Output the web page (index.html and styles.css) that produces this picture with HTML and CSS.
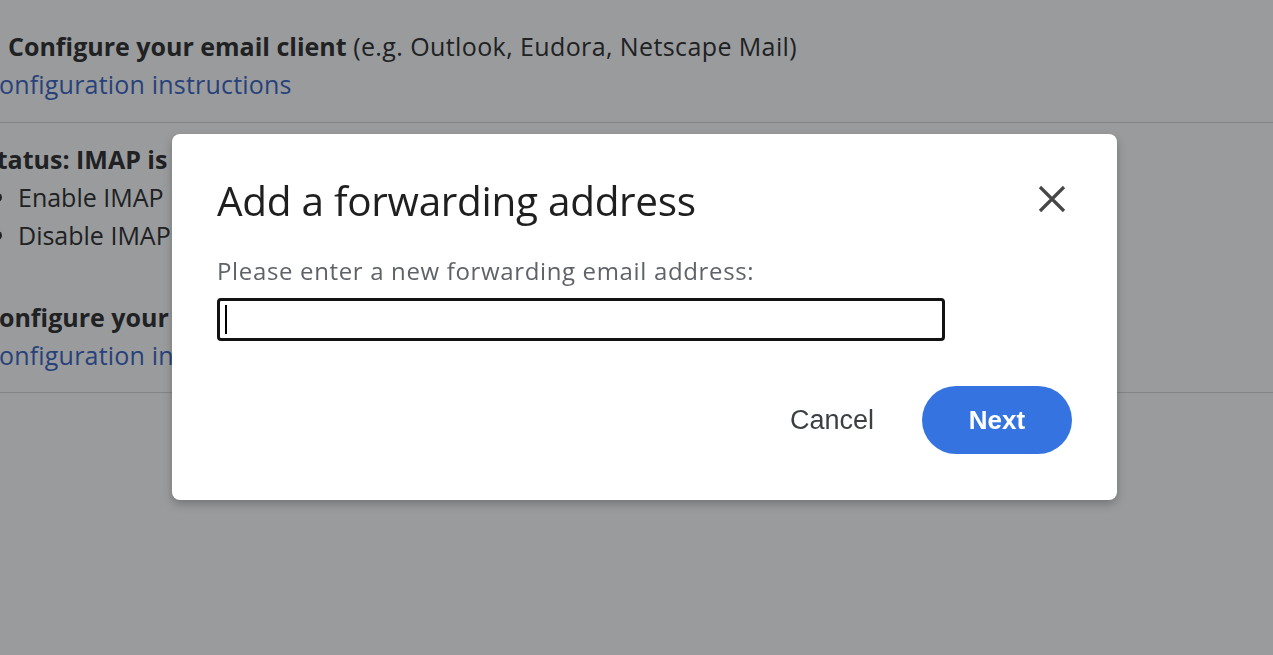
FILE: index.html
```html
<!DOCTYPE html>
<html lang="en">
<head>
<meta charset="utf-8">
<title>Add a forwarding address</title>
<link rel="stylesheet" href="styles.css">
</head>
<body>
<main class="page">
  <section class="block block-first">
    <p class="line indent"><b>Configure your email client</b> <span class="note">(e.g. Outlook, Eudora, Netscape Mail)</span></p>
    <p class="line"><a class="link" href="#">Configuration instructions</a></p>
  </section>
  <section class="block block-second">
    <p class="line"><b>Status: IMAP is disabled</b></p>
    <ul class="opts">
      <li>Enable IMAP</li>
      <li>Disable IMAP</li>
    </ul>
    <p class="line gap"><b>Configure your email client</b> <span class="note">(e.g. Outlook, Thunderbird, iPhone)</span></p>
    <p class="line"><a class="link" href="#">Configuration instructions</a></p>
  </section>
</main>

<div class="overlay">
  <div class="dialog" role="dialog" aria-labelledby="dlg-title">
    <div class="dialog-head">
      <h1 id="dlg-title" class="dialog-title">Add a forwarding address</h1>
      <button class="close" aria-label="Close">
        <svg width="30" height="30" viewBox="0 0 30 30" aria-hidden="true">
          <path d="M3 3 L27 27 M27 3 L3 27" stroke="#474747" stroke-width="3.2" fill="none"/>
        </svg>
      </button>
    </div>
    <label class="field-label" for="fwd">Please enter a new forwarding email address:</label>
    <div class="field"><span class="caret"></span><input id="fwd" class="input" type="text"></div>
    <div class="actions">
      <button class="btn-text">Cancel</button>
      <button class="btn-primary">Next</button>
    </div>
  </div>
</div>
</body>
</html>
```

FILE: styles.css
```css
html, body {
  margin: 0;
  padding: 0;
  width: 1273px;
  height: 655px;
  overflow: hidden;
  background: #ffffff;
}

.page {
  margin-left: -17px;
  font-family: "Open Sans", "Noto Sans", sans-serif;
  font-size: 25px;
  color: #202124;
}

.block {
  border-bottom: 1px solid #d6d6d6;
}

.block-first {
  padding: 27px 0 19px 0;
}

.block-second {
  padding: 17px 0 18px 0;
}

.indent {
  padding-left: 25px;
}

.line {
  margin: 0;
  line-height: 38px;
  white-space: nowrap;
}

.line b {
  font-weight: 700;
}

.note {
  letter-spacing: 0.4px;
}

.gap {
  margin-top: 44px;
}

.link {
  color: #2f5cc4;
  text-decoration: none;
  letter-spacing: 0.2px;
}

.opts {
  margin: 0;
  padding: 0 0 0 35px;
  line-height: 38px;
}

.opts li {
  white-space: nowrap;
}

.overlay {
  position: fixed;
  inset: 0;
  background: rgba(32, 33, 36, 0.45);
}

.dialog {
  position: absolute;
  left: 172px;
  top: 134px;
  width: 945px;
  height: 366px;
  box-sizing: border-box;
  background: #ffffff;
  border-radius: 8px;
  box-shadow: 0 4px 10px rgba(0, 0, 0, 0.25);
  padding: 36px 45px 0 45px;
  display: flex;
  flex-direction: column;
}

.dialog-head {
  display: flex;
  align-items: center;
  justify-content: space-between;
  height: 60px;
}

.dialog-title {
  margin: 0;
  font-family: "Open Sans", "Noto Sans", sans-serif;
  font-weight: 400;
  font-size: 40.5px;
  color: #1f1f1f;
  letter-spacing: -0.3px;
}

.close {
  border: 0;
  background: none;
  padding: 0;
  width: 30px;
  height: 30px;
  margin-right: 5px;
  margin-top: -2px;
  display: flex;
}

.field-label {
  margin-top: 26px;
  font-family: "Open Sans", "Noto Sans", sans-serif;
  font-size: 24px;
  line-height: 30px;
  letter-spacing: 0.65px;
  color: #5f6368;
}

.field {
  position: relative;
  margin-top: 12px;
  width: 728px;
  height: 43px;
  box-sizing: border-box;
  border: 3px solid #121212;
  border-radius: 4px;
}

.input {
  border: 0;
  outline: none;
  width: 100%;
  height: 100%;
  box-sizing: border-box;
  background: transparent;
  font-size: 20px;
}

.caret {
  position: absolute;
  left: 5px;
  top: 4px;
  width: 2px;
  height: 29px;
  background: #000;
}

.actions {
  display: flex;
  justify-content: flex-end;
  align-items: center;
  gap: 48px;
  margin-top: 45px;
}

.btn-text {
  border: 0;
  background: none;
  padding: 0;
  font-family: "Liberation Sans", Arial, sans-serif;
  font-size: 27px;
  color: #3c4043;
}

.btn-primary {
  border: 0;
  width: 150px;
  height: 68px;
  border-radius: 34px;
  background: #3574e0;
  color: #ffffff;
  font-family: "Liberation Sans", Arial, sans-serif;
  font-size: 26px;
  font-weight: 700;
}
```
